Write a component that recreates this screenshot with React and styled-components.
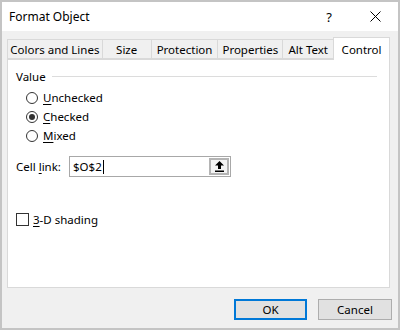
import React from "react";
import styled, { createGlobalStyle } from "styled-components";

const GlobalStyle = createGlobalStyle`
  html, body {
    margin: 0;
    padding: 0;
    background: #ffffff;
  }
  * {
    box-sizing: border-box;
  }
`;

const Window = styled.div`
  width: 400px;
  height: 330px;
  border: 2px solid #c4c4c4;
  background: #f0f0f0;
  display: flex;
  flex-direction: column;
  font-family: "Noto Sans", "DejaVu Sans", sans-serif;
  font-size: 11.5px;
  color: #000;
`;

const TitleBar = styled.div`
  height: 29px;
  background: #ffffff;
  display: flex;
  align-items: center;
  flex-shrink: 0;
`;

const Title = styled.div`
  flex: 1;
  padding-left: 7px;
  font-size: 12px;
`;

const TitleButton = styled.div`
  width: 46px;
  height: 29px;
  display: flex;
  align-items: center;
  justify-content: center;
  font-size: 13px;
`;

const Body = styled.div`
  flex: 1;
  display: flex;
  flex-direction: column;
  padding: 6px 8px 8px 5px;
`;

const TabStrip = styled.div`
  display: flex;
  align-items: flex-end;
  height: 22px;
  position: relative;
  z-index: 1;
`;

const Tab = styled.div`
  width: ${(p) => p.$w}px;
  height: ${(p) => (p.$active ? 23 : 20)}px;
  margin-bottom: ${(p) => (p.$active ? -1 : 0)}px;
  display: flex;
  align-items: center;
  justify-content: center;
  padding-top: ${(p) => (p.$active ? 0 : 1)}px;
  background: ${(p) => (p.$active ? "#ffffff" : "#f0f0f0")};
  border: 1px solid #d9d9d9;
  border-bottom: ${(p) => (p.$active ? "none" : "1px solid #d9d9d9")};
  margin-left: ${(p) => (p.$first ? 0 : -1)}px;
  white-space: nowrap;
`;

const Panel = styled.div`
  height: 229px;
  background: #ffffff;
  border: 1px solid #d9d9d9;
  padding: 8px 8px 0 8px;
  display: flex;
  flex-direction: column;
`;

const GroupHeader = styled.div`
  height: 16px;
  display: flex;
  align-items: center;
`;

const GroupLine = styled.div`
  flex: 1;
  height: 1px;
  background: #dcdcdc;
  margin-left: 6px;
  margin-right: 4px;
`;

const RadioList = styled.div`
  margin-top: 4px;
  padding-left: 10px;
  display: flex;
  flex-direction: column;
`;

const RadioRow = styled.div`
  height: 19px;
  display: flex;
  align-items: center;
  gap: 5px;
`;

const RadioCircle = styled.span`
  width: 12px;
  height: 12px;
  border-radius: 50%;
  border: 1px solid #333333;
  background: #ffffff;
  display: flex;
  align-items: center;
  justify-content: center;

  &::after {
    content: "";
    width: 6px;
    height: 6px;
    border-radius: 50%;
    background: #333333;
    display: ${(p) => (p.$checked ? "block" : "none")};
  }
`;

const Key = styled.span`
  text-decoration: underline;
  text-underline-offset: 2px;
`;

const LinkRow = styled.div`
  margin-top: 11px;
  display: flex;
  align-items: center;
`;

const LinkLabel = styled.div`
  width: 53px;
`;

const LinkBox = styled.div`
  width: 162px;
  height: 21px;
  border: 1px solid #a8a8a8;
  display: flex;
  align-items: center;
  padding: 0 1px 0 3px;
`;

const LinkValue = styled.div`
  flex: 1;
  display: flex;
  align-items: center;
`;

const Caret = styled.span`
  width: 1px;
  height: 14px;
  background: #000;
  margin-left: 1px;
`;

const PickButton = styled.div`
  width: 20px;
  height: 17px;
  border: 2px solid #b4b4b4;
  background: #f4f4f4;
  display: flex;
  align-items: center;
  justify-content: center;
`;

const CheckRow = styled.div`
  margin-top: 35px;
  display: flex;
  align-items: center;
  gap: 4px;
`;

const CheckBox = styled.span`
  width: 13px;
  height: 13px;
  border: 1px solid #333333;
  background: #ffffff;
`;

const Footer = styled.div`
  margin-top: 11px;
  margin-right: -2px;
  display: flex;
  justify-content: flex-end;
  gap: 11px;
`;

const Button = styled.div`
  width: ${(p) => p.$w}px;
  height: 21px;
  background: #e1e1e1;
  border: ${(p) => (p.$default ? "2px solid #0078d7" : "1px solid #adadad")};
  display: flex;
  align-items: center;
  justify-content: center;
`;

const tabs = [
  { label: "Colors and Lines", w: 96 },
  { label: "Size", w: 50 },
  { label: "Protection", w: 68 },
  { label: "Properties", w: 66 },
  { label: "Alt Text", w: 52 },
  { label: "Control", w: 57, active: true },
];

const CloseIcon = () => (
  <svg width="11" height="11" viewBox="0 0 11 11">
    <path d="M0.5 0.5 L10.5 10.5 M10.5 0.5 L0.5 10.5" stroke="#000" strokeWidth="1" />
  </svg>
);

const UpArrow = () => (
  <svg width="9" height="11" viewBox="0 0 9 11">
    <path d="M4.5 0 L9 4.5 L6 4.5 L6 8 L3 8 L3 4.5 L0 4.5 Z" fill="#000" />
    <rect x="0" y="9.5" width="9" height="1.5" fill="#000" />
  </svg>
);

export default function App() {
  return (
    <>
      <GlobalStyle />
      <Window>
        <TitleBar>
          <Title>Format Object</Title>
          <TitleButton>?</TitleButton>
          <TitleButton>
            <CloseIcon />
          </TitleButton>
        </TitleBar>
        <Body>
          <TabStrip>
            {tabs.map((t, i) => (
              <Tab key={t.label} $w={t.w} $active={t.active} $first={i === 0}>
                {t.label}
              </Tab>
            ))}
          </TabStrip>
          <Panel>
            <GroupHeader>
              Value
              <GroupLine />
            </GroupHeader>
            <RadioList>
              <RadioRow>
                <RadioCircle />
                <span>
                  <Key>U</Key>nchecked
                </span>
              </RadioRow>
              <RadioRow>
                <RadioCircle $checked />
                <span>
                  <Key>C</Key>hecked
                </span>
              </RadioRow>
              <RadioRow>
                <RadioCircle />
                <span>
                  <Key>M</Key>ixed
                </span>
              </RadioRow>
            </RadioList>
            <LinkRow>
              <LinkLabel>
                Cell <Key>l</Key>ink:
              </LinkLabel>
              <LinkBox>
                <LinkValue>
                  $O$2
                  <Caret />
                </LinkValue>
                <PickButton>
                  <UpArrow />
                </PickButton>
              </LinkBox>
            </LinkRow>
            <CheckRow>
              <CheckBox />
              <span>
                <Key>3</Key>-D shading
              </span>
            </CheckRow>
          </Panel>
          <Footer>
            <Button $w={73} $default>
              OK
            </Button>
            <Button $w={74}>Cancel</Button>
          </Footer>
        </Body>
      </Window>
    </>
  );
}
